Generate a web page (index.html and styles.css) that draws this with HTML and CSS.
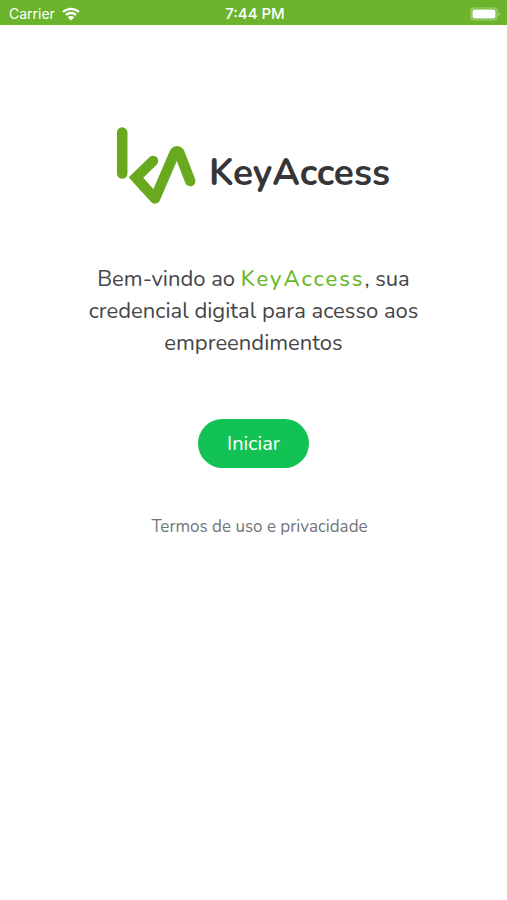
FILE: index.html
```html
<!DOCTYPE html>
<html lang="pt-BR">
<head>
<meta charset="utf-8">
<meta name="viewport" content="width=device-width, initial-scale=1">
<title>KeyAccess</title>
<link rel="stylesheet" href="styles.css">
</head>
<body>
<header class="status">
  <div class="carrier">
    <span>Carrier</span>
    <svg class="wifi" viewBox="0 0 18 14" aria-hidden="true">
      <path d="M1 5C5.500.7 12.500.7 17 5M3.900 8C6.700 5.300 11.300 5.300 14.100 8" fill="none" stroke="#fff" stroke-width="2.300"/>
      <path d="M9 13.500 5.700 10.200C7.500 8.600 10.500 8.600 12.300 10.200Z" fill="#fff"/>
    </svg>
  </div>
  <span class="time">7:44 PM</span>
  <svg class="battery" viewBox="0 0 31 14" aria-hidden="true">
    <rect x="1" y="1" width="26" height="12" rx="3.500" fill="none" stroke="#a6d37f" stroke-width="1.200"/>
    <rect x="2.500" y="2.500" width="23" height="9" rx="2" fill="#fff"/>
    <path d="M28.500 5v4q1.500-.7 1.500-2t-1.500-2z" fill="#a6d37f"/>
  </svg>
</header>
<main class="welcome">
  <h1 class="brand">
    <svg class="mark" viewBox="0 0 80 80" aria-hidden="true">
      <g fill="none" stroke="#68a91f" stroke-width="10.500" stroke-linecap="round">
        <path d="M5.200 7.500V48.500"/>
        <path d="M36 36 19 52.500 27 61.500" stroke-linejoin="miter"/>
        <path d="M27 61.500 38 73.500 57.800 27.500Q60 25 62.200 27.500L73.200 56" stroke-linejoin="round"/>
      </g>
    </svg>
    <span>KeyAccess</span>
  </h1>
  <p class="intro">Bem-vindo ao <strong class="name">KeyAccess</strong>, sua credencial digital para acesso aos empreendimentos</p>
  <button class="start" type="button">Iniciar</button>
  <a class="terms" href="#termos">Termos de uso e privacidade</a>
</main>
</body>
</html>
```
FILE: styles.css
```css
* {
  box-sizing: border-box;
}

body {
  margin: 0;
  background: #fff;
  color: #444547;
  font-family: Nunito, "Noto Sans", sans-serif;
}

.status {
  display: grid;
  grid-template-columns: 1fr auto 1fr;
  align-items: center;
  height: 25px;
  padding: 2px 6px 0 9px;
  background: #6bb42c;
  color: #fff;
  font: 14px Inter, sans-serif;
}

.carrier {
  display: flex;
  align-items: center;
  gap: 7px;
}

.wifi {
  width: 18px;
  height: 14px;
}

.time {
  font-size: 15px;
  font-weight: 500;
}

.battery {
  justify-self: end;
  width: 31px;
  height: 14px;
}

.welcome {
  display: flex;
  flex-direction: column;
  align-items: center;
  padding: 100px 80px 40px;
}

.brand {
  display: flex;
  align-items: center;
  gap: 12px;
  margin: 0;
  color: #363639;
  font: 700 37px/48px Nunito, Lato, sans-serif;
}

.brand span {
  padding-top: 16px;
}

.mark {
  width: 80px;
  height: 80px;
  overflow: visible;
}

.intro {
  max-width: 348px;
  margin: 58px 0 0;
  font-size: 22px;
  line-height: 32px;
  text-align: center;
}

.name {
  color: #6bb82c;
  font-weight: 500;
  letter-spacing: 2px;
}

.start {
  margin-top: 60px;
  padding: 10px 29px;
  border: 0;
  border-radius: 25px;
  background: #12c255;
  color: #fff;
  font: 20px/29px Nunito, "Noto Sans", sans-serif;
}

.terms {
  margin: 47px 0 0 12px;
  color: #737477;
  font-size: 17px;
  line-height: 24px;
  text-decoration: none;
}
```
